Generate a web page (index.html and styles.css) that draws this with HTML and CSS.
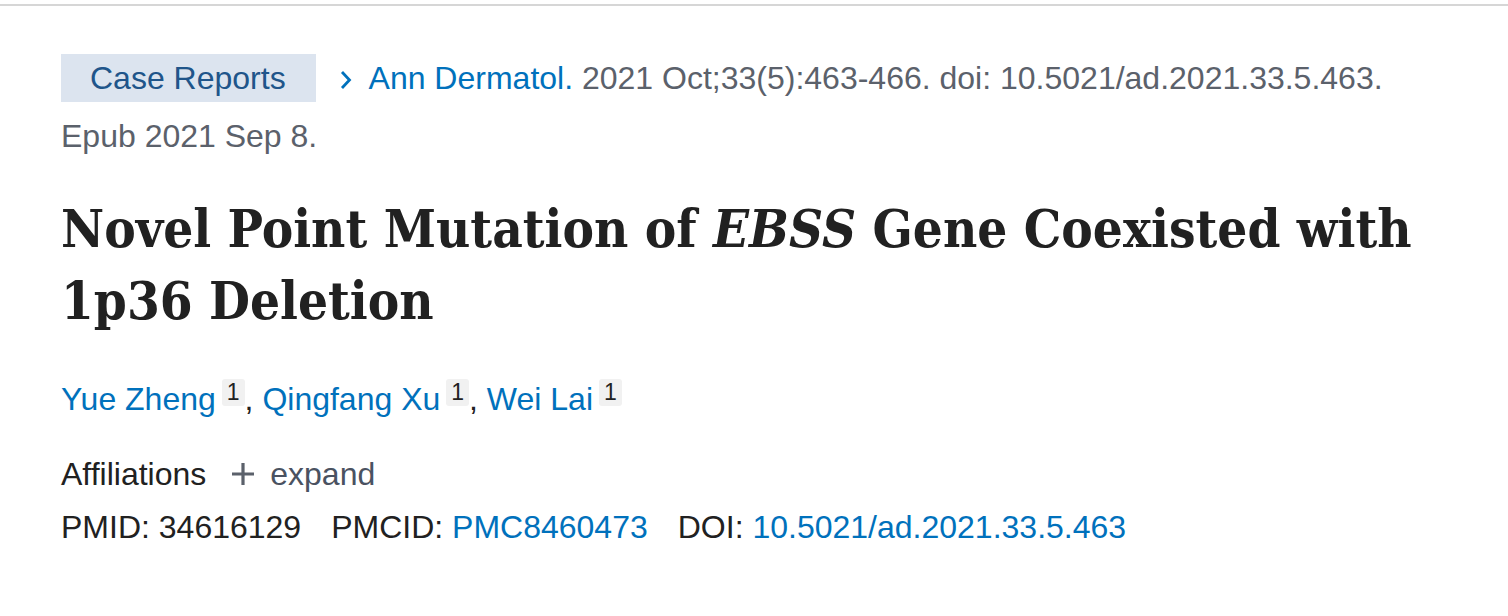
FILE: index.html
```html
<!DOCTYPE html>
<html lang="en">
<head>
<meta charset="utf-8">
<title>Novel Point Mutation of EBSS Gene Coexisted with 1p36 Deletion</title>
<link rel="stylesheet" href="styles.css">
</head>
<body>
<div class="topline"></div>
<main class="article">
  <div class="citation">
    <span class="pubtype">Case Reports</span>
    <span class="journal"><svg class="chev" viewBox="0 0 12 24" width="12" height="24"><path d="M2 4 L9.5 12 L2 20" fill="none" stroke="#0071bc" stroke-width="2.8"/></svg><a href="#" class="link">Ann Dermatol.</a></span>
    <span class="cit">2021 Oct;33(5):463-466. doi: 10.5021/ad.2021.33.5.463. Epub 2021 Sep 8.</span>
  </div>
  <h1 class="title">Novel Point Mutation of <em>EBSS</em> Gene Coexisted with 1p36 Deletion</h1>
  <div class="authors">
    <a href="#" class="link">Yue Zheng</a><sup class="aff">1</sup>, <a href="#" class="link">Qingfang Xu</a><sup class="aff">1</sup>, <a href="#" class="link">Wei Lai</a><sup class="aff">1</sup>
  </div>
  <div class="affiliations">
    <span class="aff-label">Affiliations</span>
    <span class="expand"><svg class="plus" viewBox="0 0 24 24" width="24" height="24"><path d="M12 1 V23 M1 12 H23" fill="none" stroke="#5b616b" stroke-width="3.2"/></svg>expand</span>
  </div>
  <div class="ids">
    <span class="id">PMID: 34616129</span>
    <span class="id">PMCID: <a href="#" class="link">PMC8460473</a></span>
    <span class="id">DOI: <a href="#" class="link">10.5021/ad.2021.33.5.463</a></span>
  </div>
</main>
</body>
</html>
```

FILE: styles.css
```css
html, body {
  margin: 0;
  padding: 0;
  background: #ffffff;
}
body {
  font-family: "Liberation Sans", Arial, sans-serif;
  font-size: 32px;
  color: #212121;
}
.topline {
  margin-top: 4px;
  height: 2px;
  background: #d6d6d6;
}
.article {
  padding: 0 60px 0 61px;
}
.link {
  color: #0071bc;
  text-decoration: none;
}
.citation {
  margin-top: 43px;
  line-height: 58px;
  color: #5b616b;
}
.pubtype {
  display: inline-block;
  line-height: 48px;
  padding: 0 30px 0 29px;
  background: #dce4ef;
  color: #20558a;
  margin-right: 15px;
}
.chev {
  vertical-align: -3px;
  margin-right: 17px;
}
.title {
  margin: 28px 0 0 0;
  font-family: "DejaVu Serif Condensed", "DejaVu Serif", serif;
  font-weight: bold;
  font-size: 52.5px;
  line-height: 72px;
  color: #212121;
}
.title em {
  font-style: italic;
}
.authors {
  margin-top: 40px;
  line-height: 44px;
}
.aff {
  display: inline-block;
  font-size: 23px;
  line-height: 27px;
  padding: 0 5px;
  margin-left: 6px;
  background: #f1f1f1;
  border-radius: 3px;
  vertical-align: 10px;
  color: #212121;
}
.affiliations {
  margin-top: 31px;
  line-height: 44px;
  display: flex;
  align-items: center;
  gap: 25px;
}
.expand {
  color: #4a5261;
  display: inline-flex;
  align-items: center;
  gap: 15px;
}
.plus {
  display: block;
}
.ids {
  margin-top: 9px;
  line-height: 44px;
  display: flex;
  gap: 30px;
}
```
